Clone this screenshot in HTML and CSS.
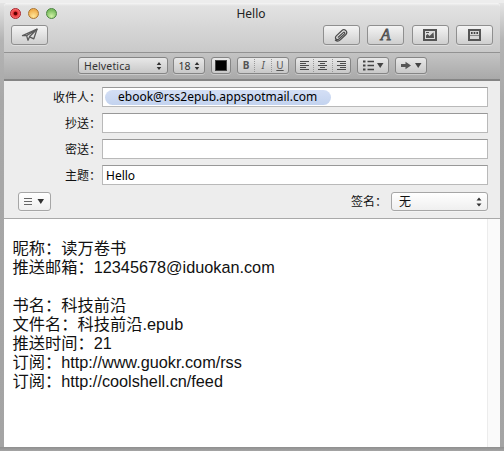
FILE: index.html
```html
<!DOCTYPE html>
<html lang="zh-CN">
<head>
<meta charset="utf-8">
<title>Hello</title>
<link rel="stylesheet" href="styles.css">
</head>
<body>
<div class="window">
  <header class="titlebar">
    <div class="title-row">
      <div class="lights"><i class="light red"></i><i class="light amber"></i><i class="light green"></i></div>
      <span class="title">Hello</span>
    </div>
    <div class="tool-row">
      <button class="btn tool"><svg width="18" height="14" viewBox="0 0 18 14" fill="none" stroke="#5b5b5b" stroke-width="1.3" stroke-linejoin="round"><path d="M1.5 7.7L16 1.2L12.8 10.8L8.6 8.8L7 12.2L5.6 7.6Z"/><path d="M5.6 7.6L16 1.2L8.4 8.8"/></svg></button>
      <div class="tools">
        <button class="btn tool"><svg width="16" height="14" viewBox="0 0 16 14" fill="none" stroke="#4c4c4c" stroke-width="1.2" stroke-linecap="round"><path d="M5.2 9.2L10.2 4.6C11.3 3.7 12.4 4.9 11.4 5.9L6.2 10.8C3.8 12.9 1 10.2 3.3 7.9L8.7 2.7C11.4 .3 15.4 3.4 12.9 6.5L7.3 11.9C5.8 13.3 3.8 13.4 2.4 12.2"/></svg></button>
        <button class="btn tool"><span class="font-a">A</span></button>
        <button class="btn tool"><svg width="14" height="12" viewBox="0 0 14 12"><rect x="1" y="1" width="12" height="10" fill="#ddd" stroke="#555" stroke-width="2"/><path d="M3 9V6.5L4.6 5L6.5 7L10.5 3.2L11 9Z" fill="#555"/><path d="M3 3H6V4H3Z" fill="#555"/></svg></button>
        <button class="btn tool"><svg width="13" height="12" viewBox="0 0 13 12"><rect x="1" y="1" width="11" height="10" fill="#d6d6d6" stroke="#555" stroke-width="2"/><path d="M3 4H4.6M5.7 4H7.3M8.4 4H10" stroke="#444" stroke-width="2"/><path d="M2 6.5H11" stroke="#888" stroke-width="1"/></svg></button>
      </div>
    </div>
  </header>
  <div class="formatbar">
    <button class="btn fmt family"><span>Helvetica</span><svg class="updown" width="6" height="8" viewBox="0 0 6 8"><path d="M.7 3L3 0L5.3 3ZM.7 5L3 8L5.3 5Z"/></svg></button>
    <button class="btn fmt size"><span>18</span><svg class="updown" width="6" height="8" viewBox="0 0 6 8"><path d="M.7 3L3 0L5.3 3ZM.7 5L3 8L5.3 5Z"/></svg></button>
    <button class="btn fmt color"><i class="swatch"></i></button>
    <div class="btn fmt group biu"><b>B</b><em>I</em><u>U</u></div>
    <div class="btn fmt group align">
      <span><svg width="10" height="10" viewBox="0 0 10 10"><path d="M0 1.5H9M0 3.5H6M0 5.5H9M0 7.5H6M0 9.5H9"/></svg></span>
      <span><svg width="10" height="10" viewBox="0 0 10 10"><path d="M0 1.5H9M2 3.5H7M0 5.5H9M2 7.5H7M0 9.5H9"/></svg></span>
      <span><svg width="10" height="10" viewBox="0 0 10 10"><path d="M0 1.5H9M3 3.5H9M0 5.5H9M3 7.5H9M0 9.5H9"/></svg></span>
    </div>
    <button class="btn fmt menu"><svg width="21" height="11" viewBox="0 0 21 11"><path d="M0 1.5H2.5M0 5.5H2.5M0 9.5H2.5" stroke="#444" stroke-width="2"/><path d="M4.5 1.5H11M4.5 5.5H11M4.5 9.5H11" stroke="#444" stroke-width="1.3"/><path d="M14 3H20.5L17.2 8Z" fill="#444"/></svg></button>
    <button class="btn fmt menu"><svg width="21" height="11" viewBox="0 0 21 11"><path d="M0 4H4.5V1.7L10 5.5L4.5 9.3V7H0Z" fill="#555"/><path d="M14 3H20.5L17.2 8Z" fill="#444"/></svg></button>
  </div>
  <section class="headers">
    <div class="row"><label>收件人：</label><div class="field to"><span class="token">ebook@rss2epub.appspotmail.com</span></div></div>
    <div class="row"><label>抄送：</label><div class="field"></div></div>
    <div class="row"><label>密送：</label><div class="field"></div></div>
    <div class="row"><label>主题：</label><div class="field"><span class="subject">Hello</span></div></div>
    <div class="options">
      <button class="btn plain list"><svg width="21" height="9" viewBox="0 0 21 9"><path d="M0 1.5H8M0 4.5H8M0 7.5H8" stroke="#666" stroke-width="1"/><path d="M13.5 2H20L16.8 7Z" fill="#333"/></svg></button>
      <label class="sign">签名：</label>
      <button class="btn plain select"><span>无</span><svg width="6" height="10" viewBox="0 0 6 10"><path d="M.5 3.6L3 .4L5.5 3.6ZM.5 6.4L3 9.6L5.5 6.4Z" fill="#333"/></svg></button>
    </div>
  </section>
  <main class="message">
    <div class="text">
      <p>昵称：读万卷书</p>
      <p>推送邮箱：<span>12345678@iduokan.com</span></p>
      <p class="blank"></p>
      <p>书名：科技前沿</p>
      <p>文件名：科技前沿<span>.epub</span></p>
      <p>推送时间：<span>21</span></p>
      <p>订阅：<span>http://www.guokr.com/rss</span></p>
      <p>订阅：<span>http://coolshell.cn/feed</span></p>
    </div>
    <div class="scroller"></div>
  </main>
</div>
</body>
</html>
```

FILE: styles.css
```css
* { box-sizing: border-box; }
body {
  margin: 0;
  height: 451px;
  padding: 3px 4px 4px;
  overflow: hidden;
  background:
    linear-gradient(#8e8e8e, #a5a5a5) 0 447px / 100% 4px no-repeat,
    linear-gradient(#ededed, #ededed) 0 0 / 100% 3px no-repeat,
    linear-gradient(#e8e8e8, #b4b4b4 40px, #a8a8a8 100px, #a4a4a4);
  font-family: "Noto Sans", "Noto Sans CJK SC", sans-serif;
  color: #111;
}
.window {
  display: flex;
  flex-direction: column;
  height: 444px;
  border-radius: 4px 4px 0 0;
  overflow: hidden;
  background: #fff;
}
.titlebar {
  height: 50px;
  flex: none;
  background: linear-gradient(#f5f5f5, #e2e2e2 3px, #c9c9c9);
  border-bottom: 1px solid #929292;
}
.title-row {
  height: 22px;
  display: grid;
  grid-template-columns: 60px 1fr 68px;
  padding-left: 6px;
}
.lights { display: flex; gap: 7px; padding-top: 5px; }
.light {
  width: 11px;
  height: 11px;
  border-radius: 50%;
  border: 1px solid;
}
.red { background: radial-gradient(circle at 50% 50%, #5e0000 0 1.3px, #e8343a 2.3px, #ff8580 5px); border-color: #a9202a; }
.amber { background: radial-gradient(circle at 50% 80%, #ffe79a, #f1b04f 70%); border-color: #a97430; }
.green { background: radial-gradient(circle at 50% 80%, #d0f2a5, #7cbd60 70%); border-color: #4c8440; }
.title { font-size: 12px; line-height: 22px; text-align: center; color: #222; }
.tool-row { display: flex; justify-content: space-between; padding: 0 7px; }
.tools { display: flex; gap: 7.4px; }
.btn {
  display: flex;
  align-items: center;
  justify-content: center;
  margin: 0;
  padding: 0;
  border: 1px solid #8f8f8f;
  border-radius: 3px;
  background: linear-gradient(#f5f5f5, #d2d2d2);
  box-shadow: 0 1px 0 rgba(255, 255, 255, .35);
  font-family: inherit;
  color: #333;
}
.tool { width: 37px; height: 20px; background: linear-gradient(#f4f4f4, #cfcfcf); }
.tool svg { display: block; }
.font-a { font: italic 16px/18px "Liberation Serif", serif; color: #777; -webkit-text-stroke: .8px #505050; }
.formatbar {
  height: 28px;
  flex: none;
  display: flex;
  gap: 6px;
  padding: 4px 0 0 74px;
  background: linear-gradient(#c4c4c4, #a9a9a9);
  border-bottom: 2px solid #858585;
}
.fmt { height: 17px; font-size: 10.5px; background: linear-gradient(#e8e8e8, #c8c8c8); border-color: #858585; }
.family { width: 90px; justify-content: space-between; padding: 0 5px; letter-spacing: .15px; }
.size { width: 32px; gap: 3px; margin-left: -1px; }
.updown { fill: #333; }
.color { width: 20px; }
.swatch { width: 12px; height: 11px; background: #000; border: 1px solid #444; }
.group > * { flex: 1; text-align: center; line-height: 13px; }
.group > * + * { border-left: 1px dotted #999; }
.biu { width: 52px; font-size: 10px; color: #555; }
.align { width: 56px; }
.align svg { display: block; margin: 1px 0 2px 4px; stroke: #4c4c4c; stroke-width: 1; }
.menu { width: 32px; }
.headers {
  height: 138px;
  flex: none;
  padding: 6px 12px 0 0;
  background: #ededed;
  border-bottom: 1px solid #a9a9a9;
}
.row { display: grid; grid-template: 20px / 97px 1fr; column-gap: 1px; margin-bottom: 6px; }
label { font-size: 12px; line-height: 22px; text-align: right; color: #111; }
.field {
  display: flex;
  align-items: center;
  background: #fff;
  border: 1px solid #b9b9b9;
  border-top-color: #989898;
}
.token {
  width: 226px;
  height: 15px;
  margin-left: 2px;
  padding-left: 13px;
  border-radius: 8px;
  background: linear-gradient(#d4dff5, #c3d3ef);
  font-size: 12px;
  line-height: 14px;
  white-space: nowrap;
  color: #000;
}
.subject { padding: 2px 0 0 3px; font-size: 12px; line-height: 18px; color: #000; }
.options { display: flex; height: 20px; margin-top: 7px; padding-left: 14px; }
.plain { height: 19px; background: linear-gradient(#fff, #efefef); border-color: #a6a6a6; }
.list { width: 33px; }
.sign { margin-left: auto; margin-right: 4px; line-height: 20px; }
.select { width: 97px; justify-content: space-between; padding: 0 5px 0 7px; font-size: 12px; line-height: 15px; color: #111; }
.select span { padding-bottom: 1px; }
.message { flex: 1; display: flex; }
.text {
  flex: 1;
  padding: 20px 0 0 8.5px;
  font: 16.26px/19px "Liberation Sans", "Noto Sans CJK SC", sans-serif;
  color: #111;
}
.text p { margin: 0; height: 19px; white-space: nowrap; }
.scroller { width: 13px; background: #fafafa; border-left: 1px solid #ececec; }
```
